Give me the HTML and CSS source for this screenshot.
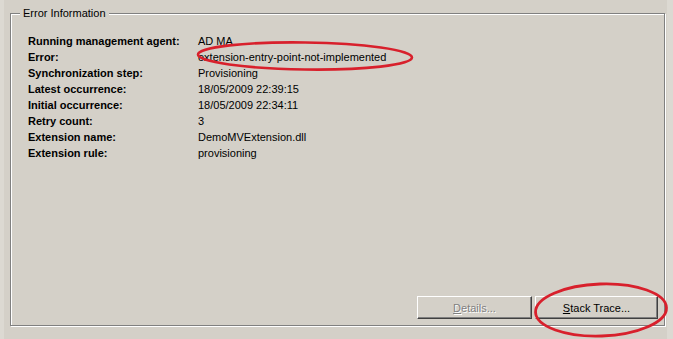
FILE: index.html
```html
<!DOCTYPE html>
<html>
<head>
<meta charset="utf-8">
<link rel="stylesheet" href="styles.css">
</head>
<body>
<div class="window">
  <div class="group">
    <span class="legend">Error Information</span>
    <div class="rows">
      <div class="row"><span class="label">Running management agent:</span><span class="value">AD MA</span></div>
      <div class="row"><span class="label">Error:</span><span class="value">extension-entry-point-not-implemented</span></div>
      <div class="row"><span class="label">Synchronization step:</span><span class="value">Provisioning</span></div>
      <div class="row"><span class="label">Latest occurrence:</span><span class="value">18/05/2009 22:39:15</span></div>
      <div class="row"><span class="label">Initial occurrence:</span><span class="value">18/05/2009 22:34:11</span></div>
      <div class="row"><span class="label">Retry count:</span><span class="value">3</span></div>
      <div class="row"><span class="label">Extension name:</span><span class="value">DemoMVExtension.dll</span></div>
      <div class="row"><span class="label">Extension rule:</span><span class="value">provisioning</span></div>
    </div>
    <div class="buttons">
      <button class="btn btn-details" disabled><u>D</u>etails...</button>
      <button class="btn btn-stack"><u>S</u>tack Trace...</button>
    </div>
  </div>
</div>
<svg class="marks" width="673" height="339" viewBox="0 0 673 339">
  <ellipse cx="305" cy="56" rx="107" ry="13.5" transform="rotate(0.8 305 56)" fill="none" stroke="#d8202c" stroke-width="2.6"/>
  <ellipse cx="601" cy="310" rx="65.5" ry="26" transform="rotate(-2 601 310)" fill="none" stroke="#d8202c" stroke-width="2.8"/>
</svg>
</body>
</html>
```
FILE: styles.css
```css
html, body {
  margin: 0;
  padding: 0;
}
body {
  background: #d4d0c8;
  width: 673px;
  height: 339px;
  overflow: hidden;
  position: relative;
  font-family: "Liberation Sans", Arial, sans-serif;
  font-size: 11px;
  color: #000;
}
.window {
  width: 673px;
  height: 339px;
  box-sizing: border-box;
  border-left: 4px solid #dcd9d2;
  border-right: 6px solid #dcd9d2;
  padding: 13px 0 0 6px;
}
.group {
  position: relative;
  width: 655px;
  height: 313px;
  box-sizing: border-box;
  border: 1px solid #808080;
  box-shadow: 1px 1px 0 #ffffff, inset 1px 1px 0 #ffffff;
  display: flex;
  flex-direction: column;
  padding: 19px 6px 6px 17px;
}
.legend {
  position: absolute;
  top: -8px;
  left: 9px;
  padding: 0 3px;
  background: #d4d0c8;
  line-height: 14px;
}
.rows {
  display: flex;
  flex-direction: column;
}
.row {
  display: flex;
  line-height: 16px;
  height: 16px;
}
.label {
  width: 170px;
  font-weight: bold;
}
.buttons {
  margin-top: auto;
  display: flex;
  justify-content: flex-end;
  gap: 3px;
}
.btn {
  height: 23px;
  font-family: "Liberation Sans", Arial, sans-serif;
  font-size: 11px;
  background: #d4d0c8;
  border: 1px solid;
  border-color: #ffffff #404040 #404040 #ffffff;
  box-shadow: inset -1px -1px 0 #808080;
  padding: 0;
  margin: 0;
  color: #000;
}
.btn-details {
  width: 115px;
  color: #808080;
  text-shadow: 1px 1px 0 #ffffff;
}
.btn-stack {
  width: 123px;
}
.marks {
  position: absolute;
  top: 0;
  left: 0;
  pointer-events: none;
}
```
